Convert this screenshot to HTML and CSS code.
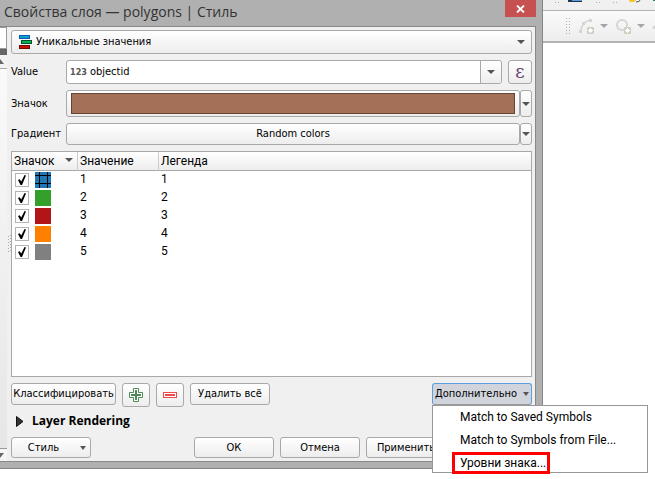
FILE: index.html
```html
<!DOCTYPE html>
<html lang="ru">
<head>
    <meta charset="UTF-8">
    <meta name="viewport" content="width=device-width, initial-scale=1.0">
    <title>Свойства слоя — polygons | Стиль</title>
    <link rel="stylesheet" href="styles.css">
</head>
<body>
    <div class="desktop">
        <!-- Layer properties dialog -->
        <div class="dialog">
            <div class="title-bar">
                <h1>Свойства слоя — polygons | Стиль</h1>
                <button class="close-btn" aria-label="Закрыть">
                    <svg width="9" height="8" viewBox="0 0 9 8"><path d="M1 .5 8 7.5M8 .5 1 7.5" stroke="#fff" stroke-width="1.8"/></svg>
                </button>
            </div>

            <div class="dialog-body">
                <!-- Edge of the page list -->
                <div class="rail">
                    <div class="rail-field"></div>
                    <div class="rail-bar"></div>
                    <div class="rail-up"><svg width="4" height="5" viewBox="0 0 4 5"><path d="M0 0 4 5H0z" fill="#666"/></svg></div>
                    <div class="rail-track"></div>
                    <div class="rail-down"><svg width="4" height="5" viewBox="0 0 4 5"><path d="M0 0H4L0 5z" fill="#666"/></svg></div>
                </div>
                <div class="splitter"><svg width="3" height="18" viewBox="0 0 3 18"><path d="M.5 1v17M2.500 0v18" stroke="#aaa" stroke-dasharray="1 2"/></svg></div>

                <div class="content">
                    <div class="renderer">
                        <svg class="renderer-icon" width="14" height="15" viewBox="0 0 14 15">
                            <rect x=".5" y=".5" width="10" height="3" fill="#00a5c8" stroke="#1458b4"/>
                            <rect x="2.5" y="5.5" width="10" height="3" fill="#00b450" stroke="#05502d"/>
                            <rect x=".5" y="10.5" width="10" height="3" fill="#c80f00" stroke="#700a05"/>
                        </svg>
                        <select class="box" aria-label="Тип отображения">
                            <option>Уникальные значения</option>
                        </select>
                        <svg class="arrow" width="8" height="4" viewBox="0 0 8 4"><path d="M0 0h8L4 4z"/></svg>
                    </div>

                    <div class="form-row">
                        <label for="value">Value</label>
                        <div class="box value-box">
                            <span class="type-tag">123</span>
                            <input id="value" type="text" value="objectid">
                            <button class="drop-btn" aria-label="Выбрать поле"><svg width="8" height="4" viewBox="0 0 8 4"><path d="M0 0h8L4 4z"/></svg></button>
                        </div>
                        <button class="box expr-btn">ε</button>
                    </div>

                    <div class="form-row symbol-row">
                        <label for="symbol">Значок</label>
                        <button id="symbol" class="box wide-btn"><span class="color-fill"></span></button>
                        <button class="box split-btn" aria-label="Параметры значка"><svg width="8" height="4" viewBox="0 0 8 4"><path d="M0 0h8L4 4z"/></svg></button>
                    </div>

                    <div class="form-row ramp-row">
                        <label for="ramp">Градиент</label>
                        <button id="ramp" class="box wide-btn">Random colors</button>
                        <button class="box split-btn" aria-label="Параметры градиента"><svg width="8" height="4" viewBox="0 0 8 4"><path d="M0 0h8L4 4z"/></svg></button>
                    </div>

                    <!-- Categories -->
                    <div class="categories">
                        <table>
                            <thead>
                                <tr>
                                    <th class="col-symbol">Значок<svg class="sort" width="8" height="4" viewBox="0 0 8 4"><path d="M0 0h8L4 4z"/></svg></th>
                                    <th class="col-value">Значение</th>
                                    <th>Легенда</th>
                                </tr>
                            </thead>
                            <tbody>
                                <tr>
                                    <td><div class="symbol-cell"><input type="checkbox" aria-label="1" checked><span class="swatch grid"></span></div></td>
                                    <td>1</td>
                                    <td>1</td>
                                </tr>
                                <tr>
                                    <td><div class="symbol-cell"><input type="checkbox" aria-label="2" checked><span class="swatch green"></span></div></td>
                                    <td>2</td>
                                    <td>2</td>
                                </tr>
                                <tr>
                                    <td><div class="symbol-cell"><input type="checkbox" aria-label="3" checked><span class="swatch red"></span></div></td>
                                    <td>3</td>
                                    <td>3</td>
                                </tr>
                                <tr>
                                    <td><div class="symbol-cell"><input type="checkbox" aria-label="4" checked><span class="swatch orange"></span></div></td>
                                    <td>4</td>
                                    <td>4</td>
                                </tr>
                                <tr>
                                    <td><div class="symbol-cell"><input type="checkbox" aria-label="5" checked><span class="swatch gray"></span></div></td>
                                    <td>5</td>
                                    <td>5</td>
                                </tr>
                            </tbody>
                        </table>
                    </div>

                    <div class="actions">
                        <button class="box classify-btn">Классифицировать</button>
                        <button class="box icon-btn" aria-label="Добавить">
                            <svg width="14" height="14" viewBox="0 0 14 14" fill="none" stroke="#4f8a55"><path d="M4.500.5h5v4h4v5h-4v4h-5v-4h-4v-5h4z" fill="#fff"/><path d="M7 2v10M2 7h10" stroke-width="2"/></svg>
                        </button>
                        <button class="box icon-btn" aria-label="Удалить">
                            <svg width="14" height="6" viewBox="0 0 14 6"><rect x=".5" y=".5" width="13" height="5" fill="#fff" stroke="#ef4b4b"/><path d="M2 3h10" stroke="#ef4b4b" stroke-width="2"/></svg>
                        </button>
                        <button class="box delete-btn">Удалить всё</button>
                        <div class="advanced">
                            <button class="box advanced-btn">Дополнительно<svg width="6" height="4" viewBox="0 0 6 4"><path d="M0 0h6L3 4z"/></svg></button>
                            <div class="menu">
                                <button>Match to Saved Symbols</button>
                                <button>Match to Symbols from File...</button>
                                <button class="marked">Уровни знака...</button>
                            </div>
                        </div>
                    </div>

                    <details class="rendering">
                        <summary><svg width="8" height="11" viewBox="0 0 8 11"><path d="M.5.5v10L7 5.500z" fill="#333" stroke="#111"/></svg>Layer Rendering</summary>
                    </details>

                    <div class="footer">
                        <button class="box style-btn">Стиль<svg width="6" height="4" viewBox="0 0 6 4"><path d="M0 0h6L3 4z"/></svg></button>
                        <div class="footer-right">
                            <button class="box">ОК</button>
                            <button class="box">Отмена</button>
                            <button class="box">Применить</button>
                        </div>
                    </div>
                </div>
            </div>
        </div>

        <!-- Main window toolbars -->
        <div class="main-window">
            <div class="toolbar toolbar-top">
                <svg width="112" height="10" viewBox="0 0 112 10">
                    <path d="M12 2.500h6M53 2.500h6M70 2.500h6" stroke="#aaa" stroke-dasharray="1 2"/>
                    <path d="M25 0h14v2H25z" fill="#1f3551"/><path d="M29 0h10v1h-10z" fill="#5f9bd6"/>
                    <path d="M86 0h7l-2 2h-4z" fill="#f5c324"/><path d="M93 2q4 0 4-2" fill="none" stroke="#555"/>
                    <path d="M110 0h2v1h-2z" fill="#35786d"/>
                </svg>
            </div>
            <div class="toolbar toolbar-edit">
                <svg width="112" height="30" viewBox="0 0 112 30">
                    <path d="M23.500 7v16M26.500 7v16" stroke="#b0b0b0" stroke-dasharray="1 2"/>
                    <path d="M38 20q0-9 10-11" fill="none" stroke="#d5d5d3" stroke-width="1.500"/>
                    <path d="M36 19h3v3h-3zM39 11h3v3h-3zM46 8h3v3h-3z" fill="#d5d5d3"/>
                    <circle cx="79" cy="14" r="5" fill="none" stroke="#d5d5d3" stroke-width="2"/>
                    <rect x="44" y="16" width="7" height="7" rx="1" fill="#d2cec4"/><path d="M47.500 17v5M45 19.500h5M46 18l3 3M49 18l-3 3" stroke="#fff"/>
                    <rect x="81" y="16" width="7" height="7" rx="1" fill="#d2cec4"/><path d="M84.500 17v5M82 19.500h5M83 18l3 3M86 18l-3 3" stroke="#fff"/>
                    <path d="M57 13h8l-4 4zM94 13h8l-4 4z" fill="#a5a5a5"/>
                    <path d="M109 17l3-3v4z" fill="#d0d0ce"/>
                </svg>
            </div>
        </div>
    </div>
</body>
</html>
```

FILE: styles.css
```css
* {
    margin: 0;
    padding: 0;
    box-sizing: border-box;
}

body {
    min-height: 100vh;
    font-family: "DejaVu Sans Condensed", "DejaVu Sans", sans-serif;
    font-size: 11px;
    line-height: 16px;
    background-color: #fff;
    color: #000;
}

button, input, select {
    font: inherit;
    color: inherit;
}

button {
    display: flex;
    align-items: center;
    justify-content: center;
    white-space: nowrap;
}

svg {
    display: block;
    flex-shrink: 0;
    fill: #555;
}

.desktop {
    display: flex;
    align-items: flex-start;
}

/* Dialog */
.dialog {
    flex: 1;
    min-width: 0;
    background-color: #b0b0b0;
    border-right: 1px solid #858585;
    border-bottom: 1px solid #858585;
    padding-bottom: 6px;
}

.title-bar {
    display: flex;
    justify-content: space-between;
    align-items: flex-start;
    height: 26px;
    padding: 0 6px 0 4px;
}

.title-bar h1 {
    font-family: "Open Sans", sans-serif;
    font-size: 14px;
    line-height: 24px;
    font-weight: normal;
    color: #333;
    white-space: nowrap;
}

.close-btn {
    width: 31px;
    height: 17px;
    border: none;
    background-color: #c75050;
}

.dialog-body {
    display: flex;
    margin-right: 6px;
    border: 1px solid #888;
    border-left: none;
    background-color: #f0f0f0;
}

/* Page list edge */
.rail {
    display: flex;
    flex-direction: column;
    width: 7px;
    background-color: #e8e8e8;
}

.rail-field {
    height: 22px;
    border: 1px solid #999;
    border-left: none;
    background-color: #fff;
}

.rail-bar {
    height: 6px;
    background-color: #666;
}

.rail-up {
    height: 14px;
    padding-top: 4px;
    border-bottom: 1px solid #aaa;
    background-color: #f2f2f2;
}

.rail-track {
    flex: 1;
    background: linear-gradient(to bottom, #fafafa, #e6e6e6);
}

.rail-down {
    height: 13px;
    padding-top: 4px;
    border-top: 1px solid #999;
    background-color: #f5f5f5;
}

.splitter {
    display: flex;
    align-items: center;
    justify-content: center;
    width: 4px;
}

.content {
    display: flex;
    flex: 1;
    flex-direction: column;
    min-width: 0;
    padding: 3px 3px 3px 0;
}

.box {
    border: 1px solid #a9a9a9;
    border-radius: 3px;
    background: linear-gradient(to bottom, #fff, #ededed);
}

/* Renderer select */
.renderer {
    position: relative;
    margin-bottom: 6px;
}

.renderer select {
    appearance: none;
    display: block;
    width: 100%;
    height: 24px;
    padding-left: 24px;
}

.renderer-icon {
    position: absolute;
    left: 8px;
    top: 5px;
}

.arrow {
    position: absolute;
    right: 7px;
    top: 10px;
}

/* Form rows */
.form-row {
    display: flex;
    height: 24px;
    margin-bottom: 6px;
}

.form-row label {
    width: 55px;
    align-self: center;
}

.value-box {
    display: flex;
    flex: 1;
    min-width: 0;
    align-items: center;
    margin-right: 6px;
    padding-left: 3px;
    background: #fff;
}

.type-tag {
    font-size: 9px;
    line-height: 12px;
    font-weight: bold;
    color: #555;
}

.value-box input {
    flex: 1;
    min-width: 0;
    padding-left: 3px;
    border: none;
    background: none;
    outline: none;
}

.drop-btn {
    align-self: stretch;
    width: 21px;
    border: none;
    border-left: 1px solid #a9a9a9;
    border-radius: 0 3px 3px 0;
    background: linear-gradient(to bottom, #fff, #ededed);
}

.expr-btn {
    width: 24px;
    font-family: "DejaVu Serif", serif;
    font-size: 18px;
    color: #6a4272;
}

.symbol-row {
    height: 27px;
}

.ramp-row {
    height: 22px;
}

.wide-btn {
    flex: 1;
    min-width: 0;
    padding: 2px 4px;
}

.color-fill {
    flex: 1;
    align-self: stretch;
    border: 1px solid #654536;
    background-color: #a57058;
}

.split-btn {
    width: 12px;
}

/* Categories */
.categories {
    min-height: 226px;
    margin-bottom: 6px;
    border: 1px solid #a9a9a9;
    background-color: #fff;
    font-family: Roboto, "Open Sans", sans-serif;
    font-size: 12px;
}

.categories table {
    width: 100%;
    table-layout: fixed;
    border-collapse: separate;
    border-spacing: 0;
}

.categories th {
    position: relative;
    height: 19px;
    padding-left: 2px;
    border-left: 1px solid #ccc;
    border-bottom: 1px solid #a9a9a9;
    background: linear-gradient(to bottom, #fff, #ededed);
    font-weight: normal;
    text-align: left;
}

.categories th:first-child {
    border-left: none;
}

.categories .col-symbol {
    width: 65px;
}

.categories .col-value {
    width: 81px;
}

.sort {
    position: absolute;
    right: 4px;
    top: 6px;
}

.categories td {
    height: 18px;
    padding-left: 3px;
    vertical-align: top;
}

.symbol-cell {
    display: flex;
    align-items: center;
    gap: 6px;
    height: 18px;
}

.symbol-cell input {
    appearance: none;
    display: grid;
    place-items: center;
    width: 14px;
    height: 14px;
    border: 1px solid #b4b4b4;
    background-color: #fff;
}

.symbol-cell input:checked::before {
    content: "";
    width: 8px;
    height: 10px;
    background-color: #000;
    clip-path: polygon(0 50%, 22% 42%, 40% 66%, 82% 0, 100% 6%, 50% 100%, 32% 100%);
}

.swatch {
    width: 16px;
    height: 16px;
}

.grid {
    background:
        linear-gradient(#000, #000) 4px 0 / 1px 100% no-repeat,
        linear-gradient(#000, #000) 12px 0 / 1px 100% no-repeat,
        linear-gradient(#000, #000) 0 3px / 100% 1px no-repeat,
        linear-gradient(#000, #000) 0 11px / 100% 1px no-repeat,
        #1f78b4;
}

.green {
    background-color: #33a02c;
}

.red {
    background-color: #b31418;
}

.orange {
    background-color: #ff7f00;
}

.gray {
    background-color: #808080;
}

/* Buttons under the table */
.actions {
    display: flex;
    align-items: flex-start;
    gap: 6px;
}

.actions .box {
    height: 22px;
}

.actions .classify-btn {
    width: 105px;
}

.actions .delete-btn {
    width: 80px;
}

.actions .icon-btn {
    width: 28px;
    height: 24px;
}

.advanced {
    position: relative;
    margin-left: auto;
}

.advanced .advanced-btn {
    width: 100px;
    gap: 6px;
    border-color: #5a9fe0;
    border-bottom-color: #999;
    background: #d2d4dc;
}

.menu {
    position: absolute;
    left: 0;
    top: 100%;
    z-index: 1;
    width: 216px;
    border: 1px solid #979797;
    background-color: #fff;
    font-family: Roboto, "Open Sans", sans-serif;
    font-size: 12px;
}

.menu button {
    height: 22px;
    margin: 0 0 1px 19px;
    padding: 0 4px 0 8px;
    border: none;
    background: none;
}

.menu .marked {
    margin-bottom: -2px;
    padding: 0 1px 0 5px;
    border: 3px solid #f00;
}

.rendering {
    margin: 6px 0 8px;
    font-family: "Open Sans", "Noto Sans", sans-serif;
    font-size: 12px;
}

.rendering summary {
    display: flex;
    align-items: center;
    gap: 8px;
    padding-left: 5px;
    font-weight: bold;
    list-style: none;
}

/* Footer */
.footer {
    display: flex;
    justify-content: space-between;
}

.footer .box {
    width: 80px;
    height: 21px;
}

.footer .style-btn {
    gap: 21px;
    padding-left: 12px;
}

.footer-right {
    display: flex;
    gap: 6px;
    padding-right: 86px;
}

/* Main window */
.main-window {
    width: 112px;
    overflow: hidden;
    border-bottom: 2px solid #b4b4b4;
}

.toolbar {
    background: linear-gradient(to bottom, #fafafa, #ededed);
}

.toolbar-top {
    border-bottom: 1px solid #b4b4b4;
    background: #f0f0f0;
}
```
